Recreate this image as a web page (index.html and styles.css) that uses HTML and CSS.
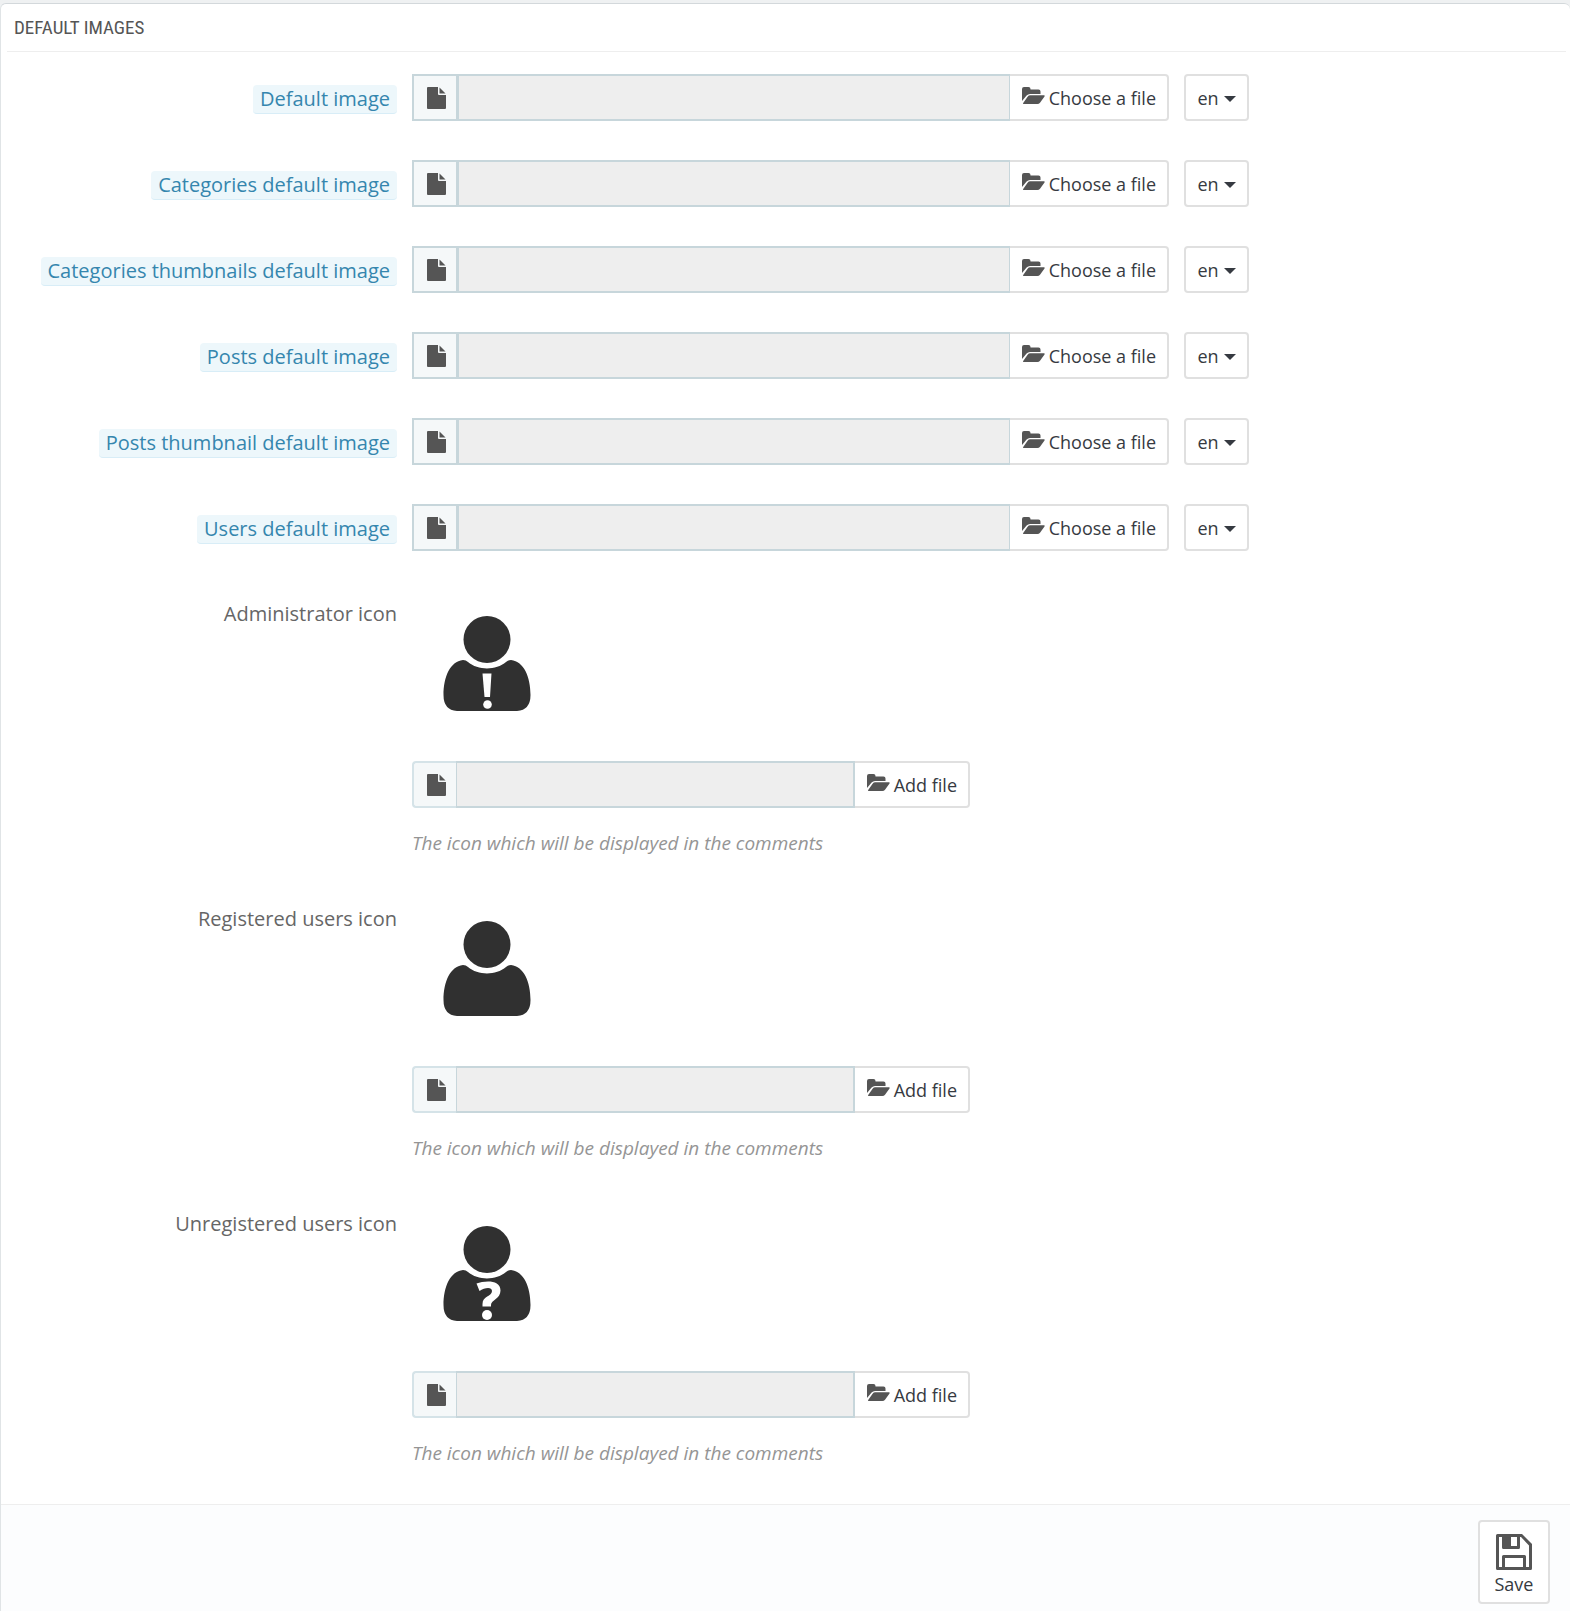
FILE: index.html
```
<!DOCTYPE html>
<html lang="en">
<head>
<meta charset="utf-8">
<meta name="viewport" content="width=device-width, initial-scale=1">
<title>Default images</title>
<link rel="stylesheet" href="styles.css">
</head>
<body>
<svg class="sprite" aria-hidden="true">
  <symbol id="file" viewBox="0 0 19 22"><path d="M0 1Q0 0 1 0H11V7Q11 8 12 8H19V21Q19 22 18 22H1Q0 22 0 21Z"/><path d="M12.500 0.500L18.500 6.500H12.500Z"/></symbol>
  <symbol id="folder" viewBox="0 0 23 17"><path d="M0 14V2Q0 0 2 0H6.500Q8.500 0 8.500 2V2.500H16.500Q18.500 2.500 18.500 4.500V7H8Q6 7 4.600 8.600Z"/><path d="M8.300 8.300H22Q23.300 8.300 22.500 9.500L18 15.700Q17 17 15.400 17H1.600Q.4 17 1.200 15.900L5.600 9.700Q6.600 8.300 8.300 8.300Z"/></symbol>
  <symbol id="person" viewBox="0 0 88 96"><circle cx="44" cy="24.500" r="23.500"/><path d="M20 45Q23 45 25 47C35 55.500 53 55.500 63 47Q65 45 68 45C81 46.500 87.500 62 87.500 80Q87.500 95 74 96H14Q.5 95 .5 80C.5 62 7 46.500 20 45Z"/></symbol>
</svg>
<form class="panel">
  <h3 class="panel-heading">Default images</h3>
  <div class="form-body">
    <div class="form-group">
      <label class="form-label" for="img1"><span class="hint">Default image</span></label>
      <div class="controls">
        <div class="file-group localized"><span class="addon"><svg class="i-file"><use href="#file"/></svg></span><input id="img1" type="text" readonly><button type="button" class="btn pick"><svg class="i-folder"><use href="#folder"/></svg>Choose a file</button></div>
        <button type="button" class="btn lang">en<span class="caret"></span></button>
      </div>
    </div>
    <div class="form-group">
      <label class="form-label" for="img2"><span class="hint">Categories default image</span></label>
      <div class="controls">
        <div class="file-group localized"><span class="addon"><svg class="i-file"><use href="#file"/></svg></span><input id="img2" type="text" readonly><button type="button" class="btn pick"><svg class="i-folder"><use href="#folder"/></svg>Choose a file</button></div>
        <button type="button" class="btn lang">en<span class="caret"></span></button>
      </div>
    </div>
    <div class="form-group">
      <label class="form-label" for="img3"><span class="hint">Categories thumbnails default image</span></label>
      <div class="controls">
        <div class="file-group localized"><span class="addon"><svg class="i-file"><use href="#file"/></svg></span><input id="img3" type="text" readonly><button type="button" class="btn pick"><svg class="i-folder"><use href="#folder"/></svg>Choose a file</button></div>
        <button type="button" class="btn lang">en<span class="caret"></span></button>
      </div>
    </div>
    <div class="form-group">
      <label class="form-label" for="img4"><span class="hint">Posts default image</span></label>
      <div class="controls">
        <div class="file-group localized"><span class="addon"><svg class="i-file"><use href="#file"/></svg></span><input id="img4" type="text" readonly><button type="button" class="btn pick"><svg class="i-folder"><use href="#folder"/></svg>Choose a file</button></div>
        <button type="button" class="btn lang">en<span class="caret"></span></button>
      </div>
    </div>
    <div class="form-group">
      <label class="form-label" for="img5"><span class="hint">Posts thumbnail default image</span></label>
      <div class="controls">
        <div class="file-group localized"><span class="addon"><svg class="i-file"><use href="#file"/></svg></span><input id="img5" type="text" readonly><button type="button" class="btn pick"><svg class="i-folder"><use href="#folder"/></svg>Choose a file</button></div>
        <button type="button" class="btn lang">en<span class="caret"></span></button>
      </div>
    </div>
    <div class="form-group">
      <label class="form-label" for="img6"><span class="hint">Users default image</span></label>
      <div class="controls">
        <div class="file-group localized"><span class="addon"><svg class="i-file"><use href="#file"/></svg></span><input id="img6" type="text" readonly><button type="button" class="btn pick"><svg class="i-folder"><use href="#folder"/></svg>Choose a file</button></div>
        <button type="button" class="btn lang">en<span class="caret"></span></button>
      </div>
    </div>
    <div class="form-group">
      <label class="form-label" for="icon1">Administrator icon</label>
      <div class="upload">
        <svg class="avatar" viewBox="0 0 88 96"><use href="#person"/><path class="mark" d="M39.500 58.500H48.500L47 82H41.500Z"/><circle class="mark" cx="44.500" cy="89.500" r="4.300"/></svg>
        <div class="file-group"><span class="addon"><svg class="i-file"><use href="#file"/></svg></span><input id="icon1" type="text" readonly><button type="button" class="btn pick"><svg class="i-folder"><use href="#folder"/></svg>Add file</button></div>
        <p class="help">The icon which will be displayed in the comments</p>
      </div>
    </div>
    <div class="form-group">
      <label class="form-label" for="icon2">Registered users icon</label>
      <div class="upload">
        <svg class="avatar" viewBox="0 0 88 96"><use href="#person"/></svg>
        <div class="file-group"><span class="addon"><svg class="i-file"><use href="#file"/></svg></span><input id="icon2" type="text" readonly><button type="button" class="btn pick"><svg class="i-folder"><use href="#folder"/></svg>Add file</button></div>
        <p class="help">The icon which will be displayed in the comments</p>
      </div>
    </div>
    <div class="form-group">
      <label class="form-label" for="icon3">Unregistered users icon</label>
      <div class="upload">
        <svg class="avatar" viewBox="0 0 88 96"><use href="#person"/><path class="mark" d="M33.500 58.500C42 55.500 57.500 54.500 57.500 65.500C57.500 74 48 75 48 80V81.500H39.500V79C39.500 71 49 71.500 49 66C49 61.500 41.500 62.500 36.500 66Z"/><circle class="mark" cx="44" cy="90" r="5"/></svg>
        <div class="file-group"><span class="addon"><svg class="i-file"><use href="#file"/></svg></span><input id="icon3" type="text" readonly><button type="button" class="btn pick"><svg class="i-folder"><use href="#folder"/></svg>Add file</button></div>
        <p class="help">The icon which will be displayed in the comments</p>
      </div>
    </div>
  </div>
  <footer class="panel-footer">
    <button type="submit" class="btn save"><svg class="i-save" viewBox="0 0 36 36"><path fill-rule="evenodd" d="M1.500 0H26L36 10V34.500Q36 36 34.500 36H1.500Q0 36 0 34.500V1.500Q0 0 1.500 0ZM3 3V33H6V22.500Q6 21 7.500 21H28.500Q30 21 30 22.500V33H33V11.500L25 3H24V13.500Q24 15 22.500 15H7.500Q6 15 6 13.500V3ZM15 3V12H21V3ZM9 24V33H27V24Z"/></svg>Save</button>
  </footer>
</form>
</body>
</html>
```
FILE: styles.css
```
* { box-sizing: border-box; }

body {
  margin: 0;
  padding-top: 3px;
  background: #eff1f2;
  color: #555;
  font: 20px/26px "Open Sans", sans-serif;
}

.sprite { display: none; }
svg { fill: #555; flex: none; }

.panel {
  min-height: calc(100vh - 3px);
  display: flex;
  flex-direction: column;
  background: #fff;
  border: 1px solid #e0e4e6;
  border-top-color: #d3d8db;
  border-right: 0;
  border-bottom: 0;
  border-radius: 6px 6px 0 0;
}

.panel-heading {
  margin: 0 4px 0 6px;
  padding: 0 7px;
  height: 48px;
  border-bottom: 1px solid #eee;
  font: 400 19px/48px "Ubuntu Condensed", "Roboto Condensed", "Liberation Sans Narrow", Roboto, sans-serif;
  text-transform: uppercase;
}

.form-body {
  display: flex;
  flex-direction: column;
  gap: 39px;
  padding: 22px 15px 38px;
}

.form-group {
  display: grid;
  grid-template-columns: minmax(0, 1fr) minmax(0, 3fr);
  gap: 15px;
  align-items: start;
}

.form-label {
  padding-top: 11px;
  text-align: right;
  color: #666;
}

.hint {
  display: inline-block;
  padding: 0 7px;
  line-height: 28px;
  background: #edf7fb;
  border-bottom: 1px solid #d8edf7;
  border-radius: 4px;
  color: #3586ae;
}

.controls {
  display: grid;
  grid-template-columns: repeat(12, minmax(0, 1fr));
  gap: 15px;
}

.file-group { display: flex; height: 47px; }
.controls .file-group { grid-column: span 8; }
.upload .file-group { max-width: 558px; }

.addon {
  width: 44px;
  padding-left: 2px;
  display: flex;
  align-items: center;
  justify-content: center;
  background: #f5f8f9;
  border: 2px solid #d5e3e8;
  border-right: 0;
  border-radius: 4px 0 0 4px;
}

.localized .addon { border-color: #c7d6db; border-radius: 0; }

.file-group input {
  flex: 1;
  min-width: 0;
  background: #eee;
  border: 2px solid #c7d6db;
  border-left-width: 1px;
  border-radius: 0;
  outline: 0;
}

.localized input { border-left-width: 3px; border-right-width: 1px; }

.btn {
  display: flex;
  align-items: center;
  justify-content: center;
  background: #fff;
  border: 2px solid #e0e0e0;
  border-radius: 4px;
  color: #363a41;
  font: 18px/24px "Open Sans", sans-serif;
}

.pick {
  gap: 4px;
  padding: 0 11px 0 12px;
  border-left: 0;
  border-radius: 0 4px 4px 0;
}

.lang { width: 65px; gap: 5px; padding: 0; }

.caret {
  margin-top: 3px;
  border: solid transparent;
  border-width: 6px 6px 0;
  border-top-color: #363a41;
}

.i-file { width: 19px; height: 22px; }
.i-folder { width: 23px; height: 17px; margin-bottom: 4px; }
.i-save { width: 36px; height: 36px; }

.avatar {
  display: block;
  width: 88px;
  height: 96px;
  margin: 25px 0 50px 31px;
  fill: #303030;
}

.mark { fill: #fff; }

.help {
  margin: 22px 0 0;
  font-size: 19px;
  font-style: italic;
  color: #959595;
}

.panel-footer {
  flex: 1;
  display: flex;
  justify-content: flex-end;
  align-items: flex-start;
  padding: 15px 20px 7px;
  background: #fcfdfe;
  border-top: 1px solid #eee;
}

.save {
  width: 72px;
  height: 84px;
  flex-direction: column;
  gap: 2px;
  padding: 5px 0 0;
}
```
